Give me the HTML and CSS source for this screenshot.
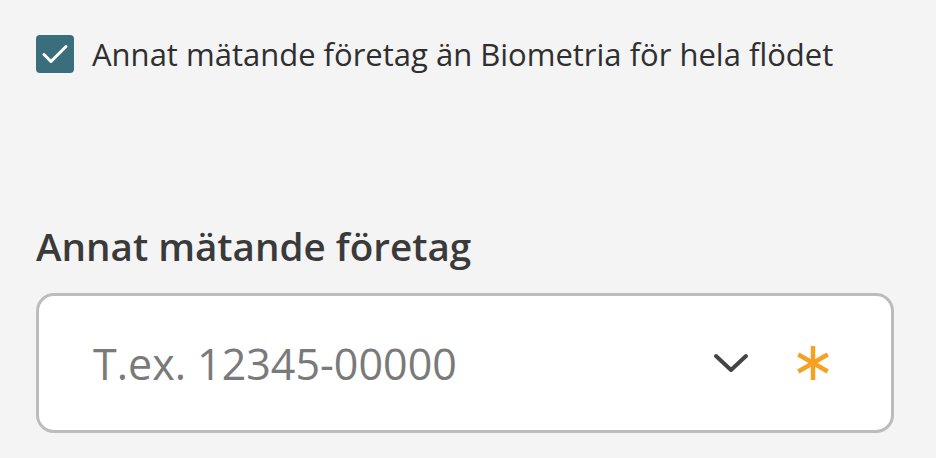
FILE: index.html
```html
<!DOCTYPE html>
<html lang="sv">
<head>
    <meta charset="UTF-8">
    <title>Mätande företag</title>
    <link rel="stylesheet" href="styles.css">
</head>
<body>
    <label class="check-row">
        <span class="check-box">
            <svg viewBox="0 0 30 30" width="30" height="30"><path d="M4 15.5l7 7L26 7.5" fill="none" stroke="#fff" stroke-width="3" stroke-linecap="round" stroke-linejoin="round"/></svg>
        </span>
        <span class="check-text">Annat mätande företag än Biometria för hela flödet</span>
    </label>

    <div class="field">
        <div class="field-label">Annat mätande företag</div>
        <div class="select">
            <span class="placeholder">T.ex. 12345-00000</span>
            <svg class="chevron" viewBox="0 0 36 20" width="36" height="20"><path d="M3 3l15 14L33 3" fill="none" stroke="#444" stroke-width="4" stroke-linecap="round" stroke-linejoin="round"/></svg>
            <svg class="required" viewBox="0 0 36 36" width="36" height="36">
                <g stroke="#f4a124" stroke-width="4.5" stroke-linecap="butt">
                    <line x1="18" y1="1" x2="18" y2="35"/>
                    <line x1="3.3" y1="9.5" x2="32.7" y2="26.5"/>
                    <line x1="3.3" y1="26.5" x2="32.7" y2="9.5"/>
                </g>
            </svg>
        </div>
    </div>
</body>
</html>
```

FILE: styles.css
```css
body {
    margin: 0;
    background-color: #f4f4f4;
    font-family: "Open Sans", Arial, sans-serif;
    color: #333;
    padding: 33px 42px 0 36px;
}
.check-row {
    display: flex;
    align-items: center;
    gap: 18px;
}
.check-box {
    width: 38px;
    height: 38px;
    border-radius: 4px;
    background-color: #3b6e7d;
    display: flex;
    align-items: center;
    justify-content: center;
    flex-shrink: 0;
}
.check-text {
    font-size: 31px;
    color: #2f2f2f;
}
.field {
    margin-top: 148px;
}
.field-label {
    font-size: 38.6px;
    font-weight: 600;
    color: #3a3a3a;
    line-height: 1.2;
    margin-bottom: 24px;
}
.select {
    height: 134px;
    background-color: #fff;
    border: 3px solid #bcbcbc;
    border-radius: 18px;
    display: flex;
    align-items: center;
    padding: 0 60px 0 54px;
}
.placeholder {
    flex: 1;
    font-size: 43px;
    color: #7a7a7a;
}
.chevron {
    margin-right: 46px;
}
```
